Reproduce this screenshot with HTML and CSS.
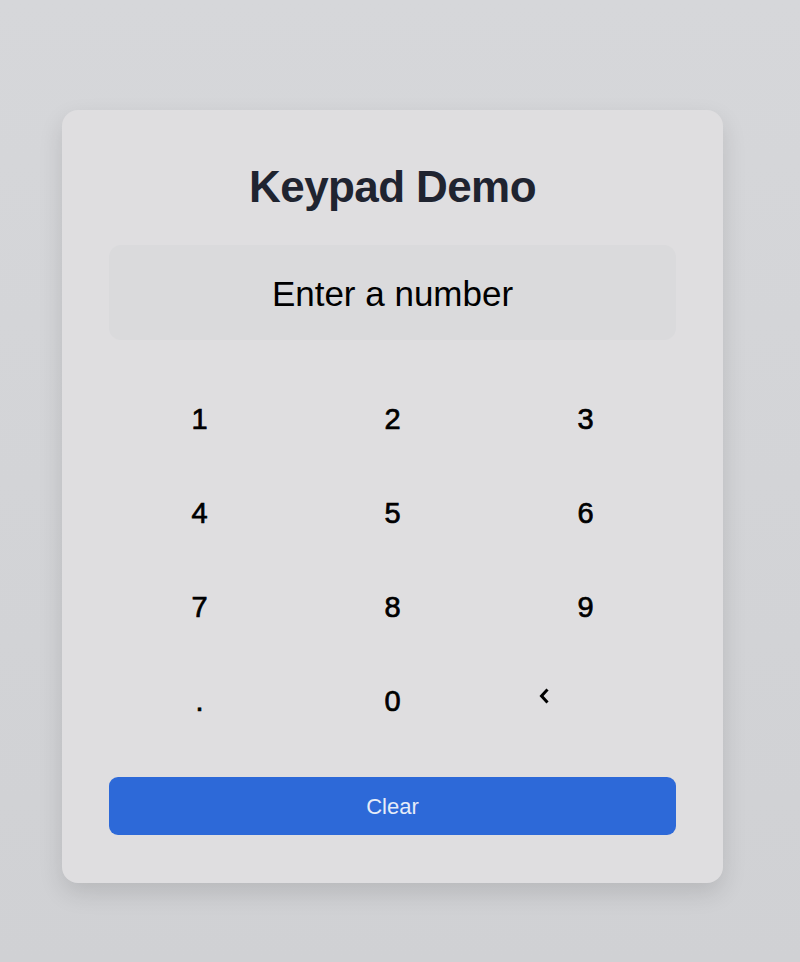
FILE: index.html
```html
<!DOCTYPE html>
<html lang="en">
<head>
  <meta charset="UTF-8">
  <meta name="viewport" content="width=device-width, initial-scale=1.0">
  <title>Keypad Demo</title>
  <link rel="stylesheet" href="styles.css">
</head>
<body>
  <div class="page">
    <div class="card">
      <h1>Keypad Demo</h1>
      <div class="display" id="display">Enter a number</div>

      <div class="keypad">
        <button class="key">1</button>
        <button class="key">2</button>
        <button class="key">3</button>
        <button class="key">4</button>
        <button class="key">5</button>
        <button class="key">6</button>
        <button class="key">7</button>
        <button class="key">8</button>
        <button class="key">9</button>
        <button class="key">.</button>
        <button class="key">0</button>
        <button class="key key-back" aria-label="Backspace">
          <svg width="12" height="16" viewBox="0 0 12 16">
            <path d="M8.5 2.5 L3.5 8 L8.5 13.5" fill="none" stroke="#000" stroke-width="3" stroke-linecap="square" stroke-linejoin="miter"/>
          </svg>
        </button>
      </div>

      <button class="clear-btn" id="clear">Clear</button>
    </div>
  </div>

  <script>
    const display = document.getElementById('display');
    let value = '';

    function render() {
      display.textContent = value || 'Enter a number';
    }

    document.querySelectorAll('.key').forEach(key => {
      key.addEventListener('click', () => {
        if (key.classList.contains('key-back')) {
          value = value.slice(0, -1);
        } else {
          value += key.textContent.trim();
        }
        render();
      });
    });

    document.getElementById('clear').addEventListener('click', () => {
      value = '';
      render();
    });
  </script>
</body>
</html>
```

FILE: styles.css
```css
html, body {
  margin: 0;
  min-height: 100%;
}
body {
  font-family: "Liberation Sans", Arial, sans-serif;
  background: linear-gradient(to bottom, #d6d7da, #d0d1d4);
  min-height: 962px;
}
.page {
  width: 785px;
  padding-top: 110px;
  display: flex;
  justify-content: center;
}
.card {
  box-sizing: border-box;
  width: 661px;
  padding: 48px 47px;
  background: #dfdee0;
  border-radius: 16px;
  box-shadow: 0 10px 25px rgba(0, 0, 0, 0.12);
}
h1 {
  margin: 0;
  text-align: center;
  font-size: 44px;
  line-height: 1.3;
  font-weight: 700;
  letter-spacing: -0.6px;
  color: #1f2430;
}
.display {
  margin-top: 30px;
  height: 95px;
  box-sizing: border-box;
  padding-top: 3px;
  display: flex;
  align-items: center;
  justify-content: center;
  background: #dadadc;
  border-radius: 12px;
  font-size: 35px;
  color: #000;
}
.keypad {
  margin: 37px 0 34px;
  display: grid;
  grid-template-columns: repeat(3, 1fr);
  grid-auto-rows: 84px;
  gap: 10px 12px;
}
.key {
  display: flex;
  align-items: center;
  justify-content: center;
  background: none;
  border: none;
  padding: 0;
  font-family: inherit;
  font-size: 29px;
  color: #000;
  -webkit-text-stroke: 0.7px #000;
  cursor: pointer;
}
.key-back {
  padding-right: 84px;
}
.key-back svg {
  margin-bottom: 10px;
}
.clear-btn {
  display: block;
  width: 100%;
  height: 58px;
  padding-top: 3px;
  border: none;
  border-radius: 9px;
  background: #2d69d8;
  color: #e6ecf8;
  font-family: inherit;
  font-size: 22px;
  cursor: pointer;
}
```
